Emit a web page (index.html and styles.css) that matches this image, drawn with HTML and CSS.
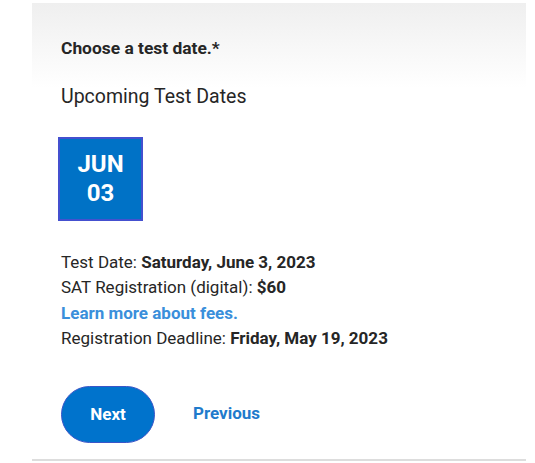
FILE: index.html
```html
<!DOCTYPE html>
<html>
<head>
<meta charset="utf-8">
<link rel="stylesheet" href="styles.css">
</head>
<body>
<div class="panel">
  <h2 class="title">Choose a test date.*</h2>
  <p class="subtitle">Upcoming Test Dates</p>
  <div class="datebox">
    <span>JUN</span>
    <span>03</span>
  </div>
  <div class="details">
    <div>Test Date: <b>Saturday, June 3, 2023</b></div>
    <div>SAT Registration (digital): <b>$60</b></div>
    <div><a class="fees" href="#">Learn more about fees.</a></div>
    <div>Registration Deadline: <b>Friday, May 19, 2023</b></div>
  </div>
  <div class="actions">
    <button class="next">Next</button>
    <a class="prev" href="#">Previous</a>
  </div>
</div>
</body>
</html>
```
FILE: styles.css
```css
html, body {
  margin: 0;
  padding: 0;
  background: #fff;
}
body {
  font-family: Roboto, "Liberation Sans", sans-serif;
  color: #262626;
}
.panel {
  margin: 3px 0 0 32px;
  width: 494px;
  height: 458px;
  box-sizing: border-box;
  padding: 34px 0 0 29px;
  background: linear-gradient(#efefef 0px, #ffffff 85px);
  border-bottom: 2px solid #dddddd;
}
.title {
  margin: 0;
  font-size: 17.4px;
  font-weight: 700;
  line-height: 22px;
}
.subtitle {
  margin: 26px 0 0 0;
  font-size: 19.5px;
  line-height: 24px;
}
.datebox {
  margin: 28px 0 0 -3px;
  width: 85px;
  height: 84px;
  box-sizing: border-box;
  background: #0072c6;
  border: 2px solid #4450cf;
  color: #fff;
  font-weight: 700;
  font-size: 24px;
  line-height: 29px;
  display: flex;
  flex-direction: column;
  align-items: center;
  justify-content: center;
}
.details {
  margin-top: 29px;
  font-size: 17px;
  line-height: 25.4px;
}
.details b {
  font-weight: 700;
}
.fees {
  color: #3a8fdb;
  font-weight: 700;
  text-decoration: none;
}
.actions {
  margin-top: 34px;
  display: flex;
  align-items: center;
  gap: 38px;
}
.next {
  width: 94px;
  height: 57px;
  border-radius: 29px;
  border: 1px solid #3a55c8;
  background: #0073cc;
  color: #fff;
  font-family: Roboto, "Liberation Sans", sans-serif;
  font-weight: 700;
  font-size: 17px;
  padding: 0;
}
.prev {
  color: #1f7bcc;
  font-weight: 700;
  font-size: 17px;
  text-decoration: none;
  margin-top: -2px;
}
```
